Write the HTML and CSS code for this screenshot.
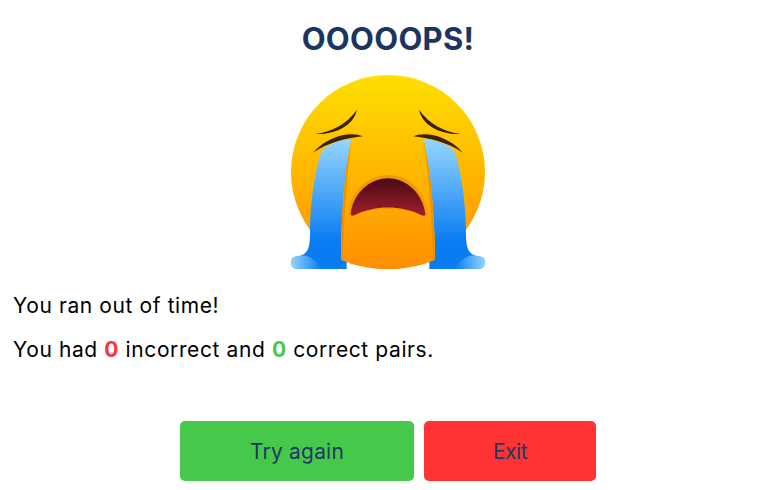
FILE: index.html
```html
<!DOCTYPE html>
<html lang="en">
<head>
<meta charset="utf-8">
<title>Oooooops</title>
<link rel="stylesheet" href="styles.css">
</head>
<body>
<main class="screen">
  <h1 class="title">OOOOOPS!</h1>
  <svg class="emoji" viewBox="33 30 582 582" aria-hidden="true">
    <defs>
      <linearGradient id="face" gradientUnits="userSpaceOnUse" x1="0" y1="30" x2="0" y2="612">
        <stop offset="0" stop-color="#ffdf00"/>
        <stop offset="1" stop-color="#ff8f00"/>
      </linearGradient>
      <linearGradient id="tear" gradientUnits="userSpaceOnUse" x1="0" y1="225" x2="0" y2="530">
        <stop offset="0" stop-color="#93d5fd"/>
        <stop offset="1" stop-color="#0a7cf2"/>
      </linearGradient>
      <linearGradient id="flareL" gradientUnits="userSpaceOnUse" x1="33" y1="0" x2="125" y2="0">
        <stop offset="0" stop-color="#93d5fd"/>
        <stop offset="1" stop-color="#93d5fd" stop-opacity="0"/>
      </linearGradient>
      <linearGradient id="flareR" gradientUnits="userSpaceOnUse" x1="615" y1="0" x2="523" y2="0">
        <stop offset="0" stop-color="#93d5fd"/>
        <stop offset="1" stop-color="#93d5fd" stop-opacity="0"/>
      </linearGradient>
      <linearGradient id="mouth" x1="0" y1="0" x2="0" y2="1">
        <stop offset="0" stop-color="#4a0b12"/>
        <stop offset="1" stop-color="#a01c30"/>
      </linearGradient>
    </defs>
    <circle cx="324" cy="321" r="291" fill="url(#face)"/>
    <!-- blue streams -->
    <path d="M215 222C170 226 145 238 125 258C104 315 90 420 90 505C90 545 85 570 55 573C40 574 33 582 33 592C33 604 42 612 52 612H200V584L183 584C184 440 195 310 215 222Z" fill="url(#tear)"/>
    <path d="M430 222C478 226 503 238 523 258C544 315 558 420 558 505C558 545 563 570 593 573C608 574 615 582 615 592C615 604 606 612 596 612H448V584L465 584C464 440 450 310 430 222Z" fill="url(#tear)"/>
    <path d="M70 571C60 573 55 573 55 573C40 574 33 582 33 592C33 604 42 612 52 612H125C110 590 90 572 70 571Z" fill="url(#flareL)"/>
    <path d="M578 571C588 573 593 573 593 573C608 574 615 582 615 592C615 604 606 612 596 612H523C538 590 558 572 578 571Z" fill="url(#flareR)"/>
    <!-- centre of face between streams -->
    <path d="M215 222C195 310 184 440 183 584C225 603 275 612 324 612C373 612 423 603 465 584C464 440 450 310 430 222Z" fill="url(#face)"/>
    <path d="M215 222C195 310 184 440 183 584L190 587C192 440 202 310 215 222Z" fill="#f09000"/>
    <path d="M430 222C450 310 464 440 465 584L458 587C456 440 444 310 430 222Z" fill="#f09000"/>
    <!-- brows and eyes -->
    <path d="M231 134C222 178 170 210 104 207C160 200 200 176 231 134Z" fill="#3c2208"/>
    <path d="M417 134C426 178 478 210 544 207C488 200 448 176 417 134Z" fill="#3c2208"/>
    <path d="M248 214C215 200 150 208 99 263C145 232 205 218 248 214Z" fill="#3c2208"/>
    <path d="M400 214C433 200 498 208 549 263C503 232 443 218 400 214Z" fill="#3c2208"/>
    <!-- mouth -->
    <path d="M324 330C262 330 210 380 206 446C206 456 216 458 224 454C285 424 363 424 424 454C432 458 442 456 442 446C438 380 386 330 324 330Z" fill="#f09a00"/>
    <path d="M324 340C265 340 218 390 212 448C212 453 218 453 222 451C285 420 363 420 426 451C430 453 436 453 436 448C430 390 383 340 324 340Z" fill="url(#mouth)"/>
  </svg>
  <div class="message">
    <p class="line">You ran out of time!</p>
    <p class="line">You had <b class="bad">0</b> incorrect and <b class="good">0</b> correct pairs.</p>
  </div>
  <div class="actions">
    <button class="btn btn-retry" type="button">Try again</button>
    <button class="btn btn-exit" type="button">Exit</button>
  </div>
</main>
</body>
</html>
```
FILE: styles.css
```css
* { box-sizing: border-box; }
html, body { margin: 0; background: #fff; }
body { font-family: "Inter", "Liberation Sans", sans-serif; overflow: hidden; }
.screen { width: 776px; height: 490px; padding: 18px 13px 0; display: flex; flex-direction: column; align-items: center; }
.title { margin: 0; height: 42px; line-height: 42px; font-size: 31px; font-weight: 700; color: #1c3560; letter-spacing: .3px; text-align: center; }
.emoji { display: block; width: 194px; height: 194px; margin-top: 15px; }
.message { width: 100%; margin-top: 22px; }
.line { margin: 0 0 14px; font-size: 21px; line-height: 30px; color: #000; letter-spacing: .6px; }
.bad { color: #ff3333; }
.good { color: #46c94a; }
.actions { display: flex; gap: 10px; margin-top: 42px; }
.btn { height: 60px; border: 0; border-radius: 5px; font: 400 21px "Inter", "Liberation Sans", sans-serif; color: #1f3864; }
.btn-retry { width: 234px; background: #46c94a; letter-spacing: .2px; }
.btn-exit { width: 172px; background: #ff3333; letter-spacing: -.5px; }
```
